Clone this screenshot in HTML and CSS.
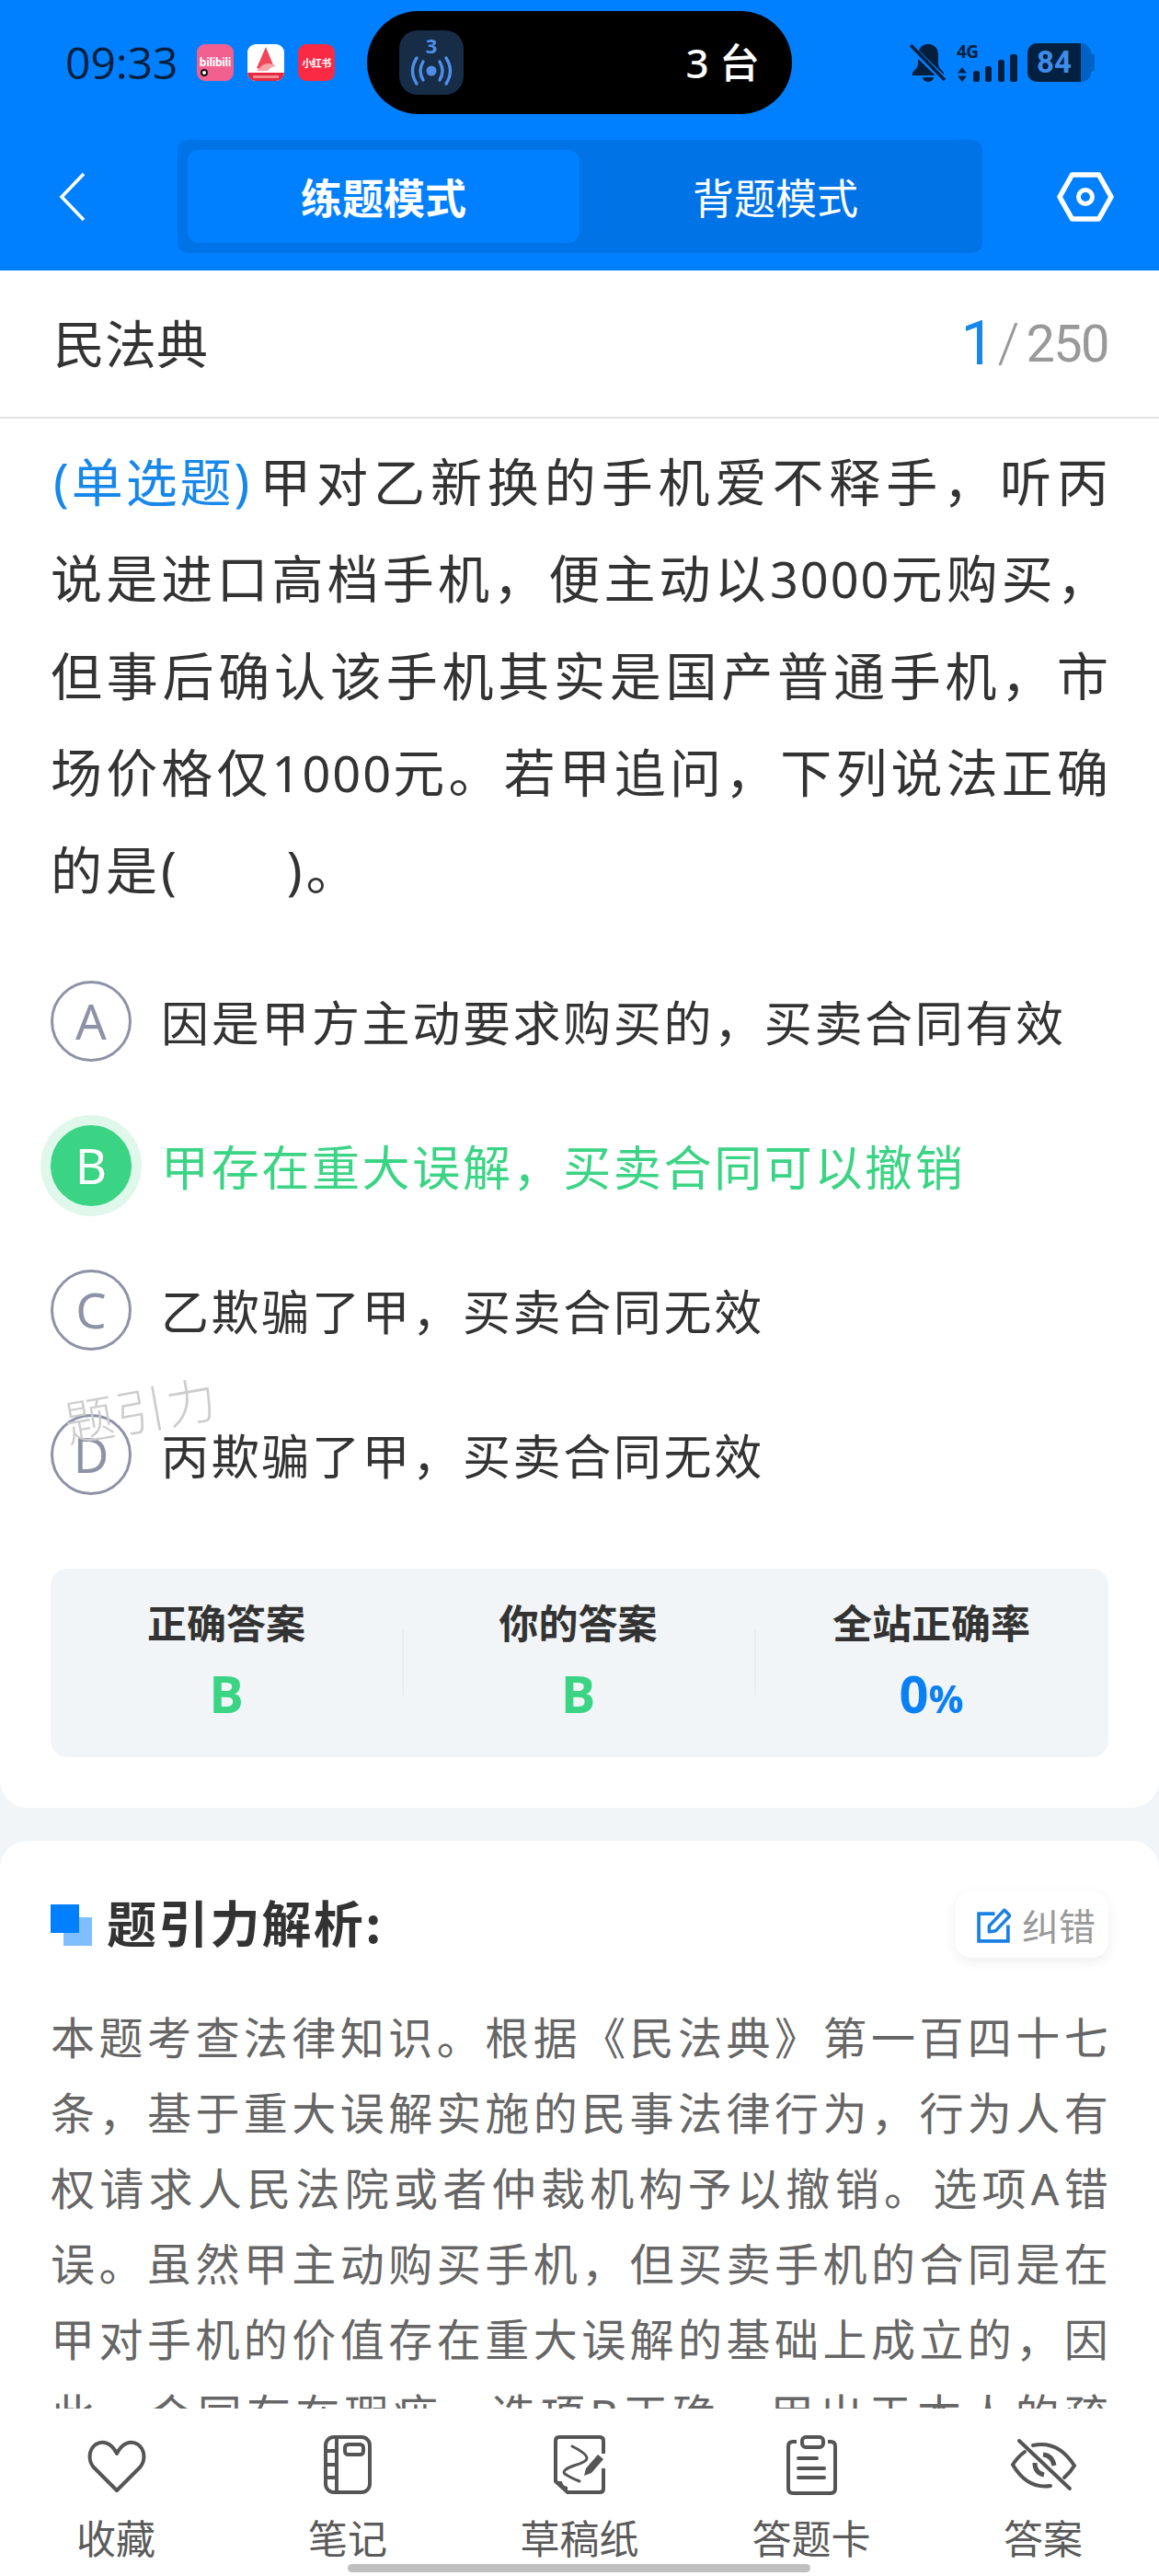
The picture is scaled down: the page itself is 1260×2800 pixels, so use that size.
FILE: index.html
```html
<!DOCTYPE html>
<html lang="zh-CN">
<head>
<meta charset="utf-8">
<title>民法典</title>
<link rel="stylesheet" href="styles.css">
</head>
<body>
<div class="page">
  <header class="header">
    <div class="status">
      <div class="status-left">
        <span class="time">09:33</span>
        <span class="app app-bili"><span class="bili-text">bilibili</span><i class="bili-dot"></i></span>
        <span class="app app-a">
          <svg viewBox="0 0 40 40" width="40" height="40"><path d="M20 3 L29 25 C26 21 22 21 19 24 C16 27 13 27 10 26 Z" fill="#f2455a"/><path d="M14 25 C18 21 24 19 31 24 C27 24 24 26 22 29 L10 29 Z" fill="#f7a3a8"/><rect x="0" y="31" width="40" height="9" fill="#e8283f"/><rect x="6" y="34" width="28" height="3" fill="#f28a96"/></svg>
        </span>
        <span class="app app-xhs">小红书</span>
      </div>
      <div class="island">
        <span class="island-icon">
          <svg viewBox="0 0 70 70" width="70" height="70"><text x="35" y="25" text-anchor="middle" class="island-num">3</text><circle cx="35" cy="44" r="5.5" fill="#4d8fe8"/><g fill="none" stroke="#4d8fe8" stroke-width="3.4" stroke-linecap="round"><path d="M26 34 Q20 44 26 54"/><path d="M44 34 Q50 44 44 54"/><path d="M19 30 Q10 44 19 58"/><path d="M51 30 Q60 44 51 58"/></g></svg>
        </span>
        <span class="island-text">3 台</span>
      </div>
      <div class="status-right">
        <svg class="bell" viewBox="0 0 40 42" width="40" height="42"><path d="M20 1 C13 1 9 6 9 13 L9 22 C9 27 5 29 3 32 L3 35 L37 35 L37 32 C35 29 31 27 31 22 L31 13 C31 6 27 1 20 1 Z" fill="#031f3d"/><path d="M14 37 a6 5 0 0 0 12 0 Z" fill="#031f3d"/><path d="M1 4 L39 41" stroke="#0080ff" stroke-width="7"/><path d="M1 2 L38 40" stroke="#031f3d" stroke-width="3.4"/></svg>
        <span class="net">
          <span class="net-label">4G</span>
          <svg class="net-arrows" viewBox="0 0 12 16" width="12" height="16"><path d="M6 0 L11 6.5 H1 Z M6 16 L11 9.5 H1 Z" fill="#031f3d"/></svg>
        </span>
        <svg class="signal" viewBox="0 0 48 30" width="48" height="30"><g fill="#031f3d"><rect x="0" y="18" width="7" height="12" rx="2.5"/><rect x="13" y="13" width="7" height="17" rx="2.5"/><rect x="27" y="6" width="7" height="24" rx="2.5"/><rect x="40" y="0" width="8" height="30" rx="2.5"/></g></svg>
        <span class="battery"><span class="battery-level">84</span><span class="battery-rest"></span><span class="battery-cap"></span></span>
      </div>
    </div>
    <nav class="nav">
      <svg class="back" viewBox="0 0 30 54" width="30" height="54"><path d="M27 2 L3 27 L27 52" fill="none" stroke="#fff" stroke-width="3.6"/></svg>
      <div class="segment">
        <span class="tab tab-active">练题模式</span>
        <span class="tab">背题模式</span>
      </div>
      <svg class="gear" viewBox="0 0 62 54" width="62" height="54"><path d="M16.5 3 H45.5 L59 27 L45.5 51 H16.5 L3 27 Z" fill="none" stroke="#fff" stroke-width="5.5" stroke-linejoin="round"/><circle cx="31" cy="27" r="7.5" fill="none" stroke="#fff" stroke-width="5"/></svg>
    </nav>
  </header>

  <div class="subject">
    <span class="subject-name">民法典</span>
    <span class="count"><b class="count-now">1</b><i class="count-sep">/</i><span class="count-all">250</span></span>
  </div>

  <main class="scroll">
    <section class="card card-question">
      <p class="question"><span class="qtype">(单选题)</span>甲对乙新换的手机爱不释手，听丙说是进口高档手机，便主动以<span class="num">3000</span>元购买，但事后确认该手机其实是国产普通手机，市场价格仅<span class="num">1000</span>元。若甲追问，下列说法正确的是(<span class="blank"></span>)。</p>
      <ul class="options">
        <li class="option"><span class="letter">A</span><span class="option-text">因是甲方主动要求购买的，买卖合同有效</span></li>
        <li class="option option-right"><span class="letter">B</span><span class="option-text">甲存在重大误解，买卖合同可以撤销</span></li>
        <li class="option"><span class="letter">C</span><span class="option-text">乙欺骗了甲，买卖合同无效</span></li>
        <li class="option"><span class="letter">D</span><span class="option-text">丙欺骗了甲，买卖合同无效</span><span class="watermark">题引力</span></li>
      </ul>
      <div class="stats">
        <div class="stat"><span class="stat-label">正确答案</span><span class="stat-value green">B</span></div>
        <div class="stat"><span class="stat-label">你的答案</span><span class="stat-value green">B</span></div>
        <div class="stat"><span class="stat-label">全站正确率</span><span class="stat-value blue">0<small>%</small></span></div>
      </div>
    </section>

    <section class="card card-analysis">
      <div class="analysis-head">
        <h2 class="analysis-title"><span class="squares"><i class="sq-light"></i><i class="sq-dark"></i></span><span class="title-text">题引力解析:</span></h2>
        <span class="report">
          <svg viewBox="0 0 36 38" width="37" height="39"><path d="M19 7 H2 V36 H33 V19" fill="none" stroke="#1a80e6" stroke-width="3.6"/><path d="M13 20 L29 3 L35 9 L20 25 L13 26 Z" fill="none" stroke="#1a80e6" stroke-width="3.4" stroke-linejoin="round"/></svg>
          纠错
        </span>
      </div>
      <p class="analysis">本题考查法律知识。根据《民法典》第一百四十七条，基于重大误解实施的民事法律行为，行为人有权请求人民法院或者仲裁机构予以撤销。选项A错误。虽然甲主动购买手机，但买卖手机的合同是在甲对手机的价值存在重大误解的基础上成立的，因此，合同存在瑕疵。选项B正确。甲出于本人的疏忽，对手机的品质和价值产生了错误认识。</p>
    </section>
  </main>

  <footer class="tabbar">
    <div class="tabbar-item">
      <svg viewBox="0 0 64 64" width="64" height="64" class="tab-icon"><path d="M33 60 L7.5 34.5 C1.5 27 2.5 15.5 10 10 C17 5.5 27 7.5 33 20 C39 7.5 49 5.5 56 10 C63.5 15.5 64.5 27 58.5 34.5 Z" stroke-linejoin="round"/></svg>
      <span>收藏</span>
    </div>
    <div class="tabbar-item">
      <svg viewBox="0 0 64 64" width="64" height="64" class="tab-icon"><rect x="8" y="2" width="48" height="60" rx="9"/><path d="M20 2 V62 M8 17 H20 M8 32 H20 M8 46 H20"/><rect x="29" y="10" width="20" height="11" rx="3.5"/></svg>
      <span>笔记</span>
    </div>
    <div class="tabbar-item">
      <svg viewBox="0 0 64 64" width="64" height="64" class="tab-icon"><path d="M58 20 V6 Q58 2 54 2 H10 Q6 2 6 6 V50 L19 62 H54 Q58 62 58 58 V36"/><path class="thin" d="M24 12 Q40 20 40 25 Q40 29 26 33 Q12 38 16 42 Q22 46 32 50"/><path class="solid" d="M6 50 L19 62 L19 56 Q13 55 13 50 Z"/><path class="solid" d="M52 21 L58 26 L45 41 L37 44 L39 36 Z"/></svg>
      <span>草稿纸</span>
    </div>
    <div class="tabbar-item">
      <svg viewBox="0 0 64 64" width="64" height="64" class="tab-icon"><path d="M16 7 H12 Q7 7 7 12 V58 Q7 63 12 63 H53 Q58 63 58 58 V12 Q58 7 53 7 H50"/><rect x="22" y="2" width="23" height="11" rx="4"/><path d="M18 25 H38 M18 36 H46 M18 46 H46" stroke-linecap="round"/></svg>
      <span>答题卡</span>
    </div>
    <div class="tabbar-item">
      <svg viewBox="0 0 64 64" width="64" height="64" class="tab-icon tab-icon-free"><path d="M6 6 L61 58" stroke-linecap="round"/><path d="M21 11 Q48 5 66 33 Q62 40 55 46" stroke-linecap="round"/><path d="M40 55 Q15 59 -1 32 Q4 24 12 18" stroke-linecap="round"/><path d="M32 21 Q42 22 44 33" stroke-width="5"/><path d="M23 30 Q23 41 33 43" stroke-width="5"/></svg>
      <span>答案</span>
    </div>
    <i class="home-bar"></i>
  </footer>
</div>
</body>
</html>
```
FILE: styles.css
```css
* { box-sizing: border-box; margin: 0; padding: 0; }
html, body { background: #f2f5f8; }
body { font-family: "Noto Sans", "Noto Sans CJK SC", sans-serif; color: #333; }
.page { width: 1260px; height: 2800px; display: flex; flex-direction: column; overflow: hidden; }

.header { height: 294px; background: #0080ff; padding-top: 12px; flex: none; }
.status { display: grid; grid-template-columns: 399px 462px 399px; height: 112px; align-items: center; }
.status-left { display: flex; align-items: center; padding-left: 71px; }
.time { font-size: 48px; line-height: 60px; font-weight: 500; color: #031f3d; width: 143px; font-family: "Open Sans", sans-serif; }
.app { width: 40px; height: 40px; border-radius: 9px; overflow: hidden; margin-right: 15px; display: flex; align-items: center; justify-content: center; position: relative; }
.app-bili { background: #f2608f; }
.bili-text { font-size: 12px; font-weight: 700; color: #fff; line-height: 1; letter-spacing: -.3px; }
.bili-dot { position: absolute; left: 4px; bottom: 5px; width: 8px; height: 8px; border: 2px solid #111; border-radius: 50%; background: #fff; }
.app-a { background: #fff; }
.app-xhs { background: #fa2a45; color: #fff; font-size: 11px; font-weight: 700; font-family: "Noto Sans CJK SC", sans-serif; white-space: nowrap; letter-spacing: -.6px; }

.island { height: 112px; background: #000; border-radius: 56px; display: flex; align-items: center; justify-content: space-between; padding: 0 35px 0 35px; }
.island-icon { width: 70px; height: 70px; border-radius: 20px; background: #172c47; display: block; }
.island-icon svg { display: block; }
.island-num { font-size: 22px; font-weight: 700; fill: #4d8fe8; font-family: "Noto Sans", sans-serif; }
.island-text { color: #fff; font-size: 44px; line-height: 56px; font-weight: 500; }

.status-right { display: flex; align-items: center; padding-left: 128px; height: 42px; }
.bell { flex: none; margin-right: 11px; }
.net { display: flex; flex-direction: column; width: 30px; height: 42px; margin-right: -12px; }
.net-label { font-size: 19px; line-height: 19px; height: 26px; font-weight: 700; color: #031f3d; letter-spacing: -.5px; }
.net-arrows { display: block; }
.signal { flex: none; margin-top: 12px; margin-right: 11px; margin-left: 0; }
.battery { display: flex; height: 42px; align-items: stretch; position: relative; }
.battery-level { width: 58px; background: #02203f; border-radius: 10px 0 0 10px; color: #3f8de8; font-size: 33px; font-weight: 700; line-height: 42px; text-align: center; font-family: "Roboto", sans-serif; }
.battery-rest { width: 11px; background: #0062c4; border-radius: 0 10px 10px 0; }
.battery-cap { width: 4px; height: 20px; margin-top: 11px; background: #0062c4; border-radius: 0 4px 4px 0; }

.nav { display: flex; align-items: center; height: 123px; margin-top: 28px; padding-left: 64px; }
.back { flex: none; margin-right: 99px; }
.segment { width: 875px; height: 123px; background: #0073e6; border-radius: 12px; padding: 11px; display: flex; flex: none; }
.tab { width: 426px; display: flex; align-items: center; justify-content: center; color: #fff; font-size: 45px; line-height: 60px; font-family: "Noto Sans CJK SC", sans-serif; }
.tab-active { background: #0080ff; border-radius: 12px; font-weight: 700; }
.gear { flex: none; margin-left: 81px; }

.subject { height: 161px; background: #fff; border-bottom: 2px solid #e3e3e3; display: flex; align-items: center; justify-content: space-between; padding: 0 55px 6px 58px; flex: none; }
.subject-name { font-size: 56px; line-height: 70px; color: #333; font-family: "Noto Sans CJK SC", sans-serif; }
.count { display: flex; align-items: baseline; font-family: "Roboto", sans-serif; color: #999; padding-top: 2px; }
.count-now { font-size: 66px; line-height: 70px; font-weight: 400; color: #1787ea; margin-right: 3px; transform: translateY(3px); }
.count-sep { font-size: 60px; font-style: normal; margin-right: 7px; font-weight: 300; }
.count-all { font-size: 56px; letter-spacing: -1.6px; }

.scroll { flex: 1; min-height: 0; overflow: hidden; }
.card { background: #fff; }
.card-question { padding: 16px 55px 55px; border-radius: 0 0 30px 30px; }
.question { font-size: 56px; line-height: 105px; letter-spacing: 4px; text-align: justify; color: #333; font-family: "Noto Sans", "Noto Sans CJK SC", sans-serif; margin-right: -4px; }
.qtype { color: #1787ea; letter-spacing: 1px; margin-left: 3px; margin-right: 8px; }
.num { font-size: 54px; letter-spacing: 2px; }
.blank { display: inline-block; width: 116px; }

.options { list-style: none; margin-top: 33px; position: relative; }
.option { height: 157px; display: flex; align-items: center; position: relative; }
.letter { width: 88px; height: 88px; border: 3px solid #8e92a6; border-radius: 50%; color: #8e92a6; font-size: 53px; display: flex; align-items: center; justify-content: center; flex: none; margin-right: 32px; font-family: "Noto Sans", sans-serif; font-weight: 400; }
.option-text { font-size: 52px; letter-spacing: 2.65px; line-height: 70px; color: #333; font-family: "Noto Sans CJK SC", sans-serif; white-space: nowrap; }
.option-right .letter { background: #3bd484; border-color: #3bd484; color: #fff; box-shadow: 0 0 0 11px rgba(59, 212, 132, .16); }
.option-right .option-text { color: #3bd484; }
.watermark { position: absolute; left: 14px; top: -6px; font-size: 54px; line-height: 70px; letter-spacing: 2px; color: #ccc; transform: rotate(-10deg); font-family: "Noto Sans CJK SC", sans-serif; font-weight: 300; }

.stats { margin-top: 46px; height: 205px; background: #f2f5f8; border-radius: 18px; display: grid; grid-template-columns: 382px 383px 1fr; padding-top: 27px; }
.stat { display: flex; flex-direction: column; align-items: center; height: 129px; position: relative; }
.stat + .stat::before { content: ""; position: absolute; left: 0; top: 39px; height: 72px; border-left: 2px solid #e9edf1; }
.stat-label { font-size: 43px; line-height: 60px; font-weight: 700; color: #333; font-family: "Noto Sans CJK SC", sans-serif; }
.stat-value { font-size: 56px; line-height: 76px; margin-top: 10px; font-weight: 700; font-family: "Open Sans", sans-serif; }
.stat-value small { font-size: 42px; font-weight: 700; }
.green { color: #3bd484; }
.blue { color: #0a80f5; }

.card-analysis { margin-top: 36px; padding: 55px 55px 40px; border-radius: 30px 30px 0 0; }
.analysis-head { display: flex; justify-content: space-between; align-items: center; height: 72px; }
.analysis-title { display: flex; align-items: center; font-size: 54px; line-height: 72px; font-weight: 700; color: #333; font-family: "Noto Sans CJK SC", sans-serif; }
.title-text { letter-spacing: 2.2px; margin-top: -6px; }
.squares { width: 45px; height: 45px; position: relative; margin-right: 16px; display: block; }
.sq-dark { position: absolute; left: 0; top: 0; width: 31px; height: 31px; background: #0080ff; }
.sq-light { position: absolute; right: 0; bottom: 0; width: 31px; height: 31px; background: #80bfff; }
.report { width: 167px; height: 72px; border-radius: 18px; background: #fff; box-shadow: 0 4px 14px rgba(0, 0, 0, .07); display: flex; align-items: center; justify-content: flex-start; padding-left: 24px; gap: 12px; color: #999; font-size: 40px; font-family: "Noto Sans CJK SC", sans-serif; }
.analysis { margin-top: 46px; margin-right: -4px; font-size: 48px; line-height: 82px; letter-spacing: 4.2px; color: #666; text-align: justify; font-family: "Noto Sans", "Noto Sans CJK SC", sans-serif; }

.tabbar { height: 182px; background: #fff; flex: none; display: grid; grid-template-columns: repeat(5, 252px); position: relative; padding-top: 29px; }
.tabbar-item { display: flex; flex-direction: column; align-items: center; color: #5a5a5a; font-size: 43px; line-height: 56px; font-family: "Noto Sans CJK SC", sans-serif; }
.tabbar-item span { margin-top: 18px; display: block; }
.tab-icon { display: block; fill: none; stroke: #555; stroke-width: 4; overflow: visible; }
.tab-icon .thin { stroke-width: 3; stroke-linecap: round; }
.tab-icon .solid { fill: #555; stroke: none; }
.home-bar { position: absolute; left: 378px; bottom: 4px; width: 503px; height: 9px; border-radius: 5px; background: #c0c0c0; }
```
